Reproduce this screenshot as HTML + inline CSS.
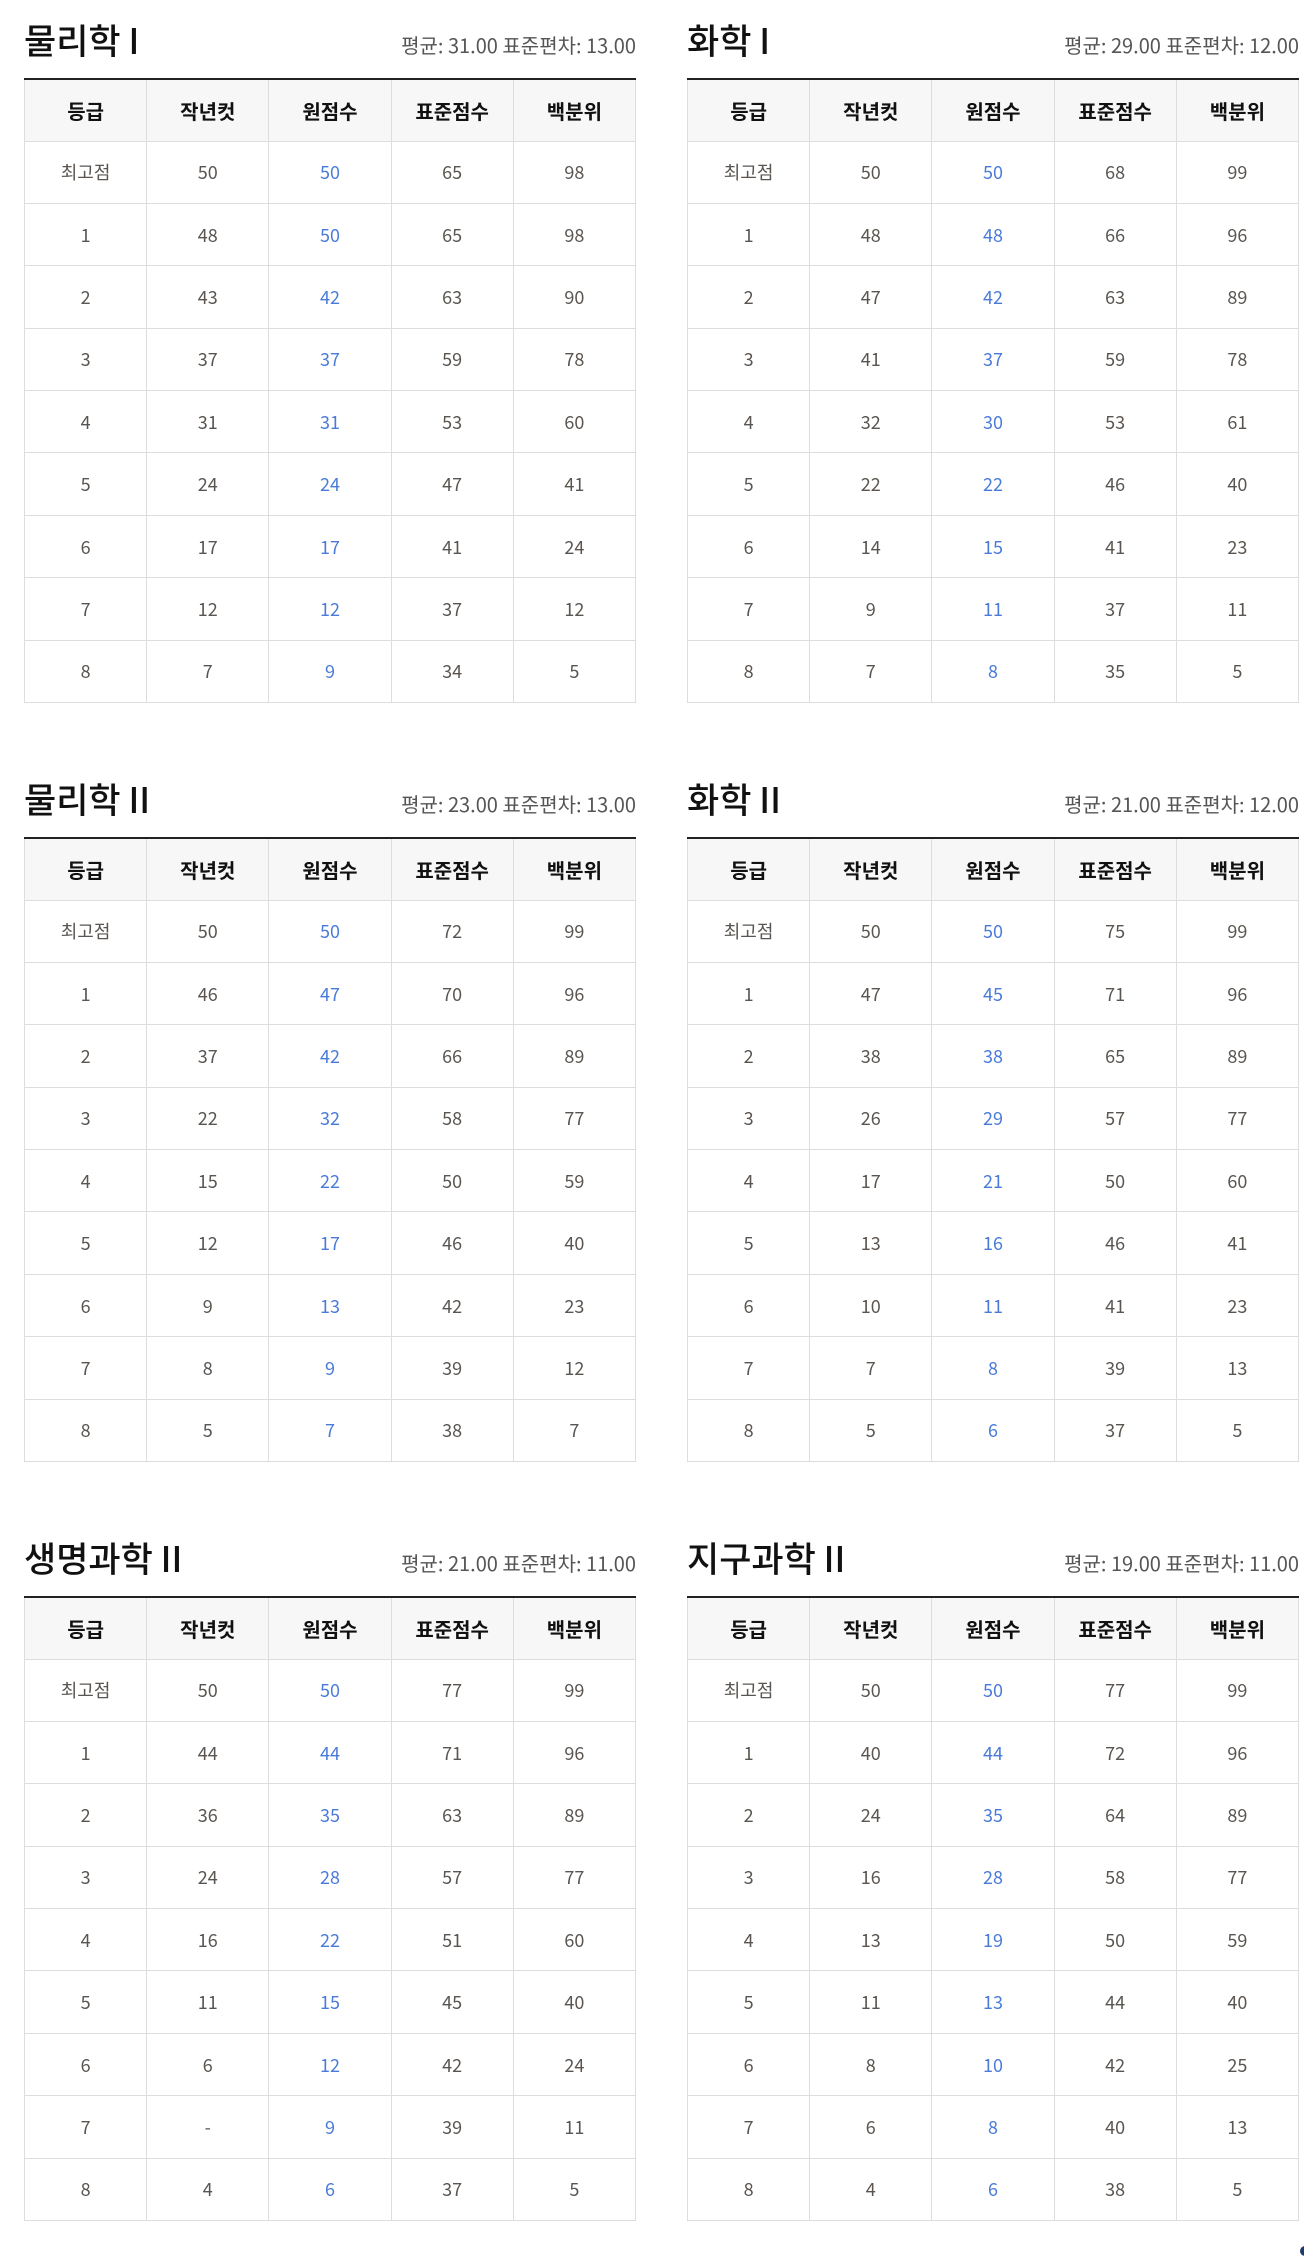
<!DOCTYPE html>
<html><head><meta charset="utf-8">
<style>
*{margin:0;padding:0;box-sizing:border-box}
html,body{width:1304px;height:2264px;background:#fff;overflow:hidden;font-family:"Noto Sans CJK KR","Liberation Sans",sans-serif}
.sec{position:absolute;width:612px;height:720px}
.t{position:absolute;left:0;top:18px;font-size:35px;line-height:44px;color:#111;font-weight:500}
.s{position:absolute;right:0;top:32px;font-size:20px;line-height:26px;color:#555}
table{position:absolute;left:0;top:78px;width:612px;border-collapse:collapse;border-top:2px solid #222;table-layout:fixed}
td,th{border:1px solid #ddd;text-align:center;font-size:18px;color:#5a5550;height:62.4px;padding:0}
th{background:#f7f7f7;color:#111;font-weight:bold;font-size:20px;height:62px;border-top:none}
td.b{color:#4a7bd8}
</style></head><body>

<div class="sec" style="left:24px;top:0">
<div class="t">물리학 I</div><div class="s">평균: 31.00 표준편차: 13.00</div>
<table><tr><th>등급</th><th>작년컷</th><th>원점수</th><th>표준점수</th><th>백분위</th></tr>
<tr><td>최고점</td><td>50</td><td class="b">50</td><td>65</td><td>98</td></tr>
<tr><td>1</td><td>48</td><td class="b">50</td><td>65</td><td>98</td></tr>
<tr><td>2</td><td>43</td><td class="b">42</td><td>63</td><td>90</td></tr>
<tr><td>3</td><td>37</td><td class="b">37</td><td>59</td><td>78</td></tr>
<tr><td>4</td><td>31</td><td class="b">31</td><td>53</td><td>60</td></tr>
<tr><td>5</td><td>24</td><td class="b">24</td><td>47</td><td>41</td></tr>
<tr><td>6</td><td>17</td><td class="b">17</td><td>41</td><td>24</td></tr>
<tr><td>7</td><td>12</td><td class="b">12</td><td>37</td><td>12</td></tr>
<tr><td>8</td><td>7</td><td class="b">9</td><td>34</td><td>5</td></tr></table></div>

<div class="sec" style="left:687px;top:0">
<div class="t">화학 I</div><div class="s">평균: 29.00 표준편차: 12.00</div>
<table><tr><th>등급</th><th>작년컷</th><th>원점수</th><th>표준점수</th><th>백분위</th></tr>
<tr><td>최고점</td><td>50</td><td class="b">50</td><td>68</td><td>99</td></tr>
<tr><td>1</td><td>48</td><td class="b">48</td><td>66</td><td>96</td></tr>
<tr><td>2</td><td>47</td><td class="b">42</td><td>63</td><td>89</td></tr>
<tr><td>3</td><td>41</td><td class="b">37</td><td>59</td><td>78</td></tr>
<tr><td>4</td><td>32</td><td class="b">30</td><td>53</td><td>61</td></tr>
<tr><td>5</td><td>22</td><td class="b">22</td><td>46</td><td>40</td></tr>
<tr><td>6</td><td>14</td><td class="b">15</td><td>41</td><td>23</td></tr>
<tr><td>7</td><td>9</td><td class="b">11</td><td>37</td><td>11</td></tr>
<tr><td>8</td><td>7</td><td class="b">8</td><td>35</td><td>5</td></tr></table></div>

<div class="sec" style="left:24px;top:759px">
<div class="t">물리학 II</div><div class="s">평균: 23.00 표준편차: 13.00</div>
<table><tr><th>등급</th><th>작년컷</th><th>원점수</th><th>표준점수</th><th>백분위</th></tr>
<tr><td>최고점</td><td>50</td><td class="b">50</td><td>72</td><td>99</td></tr>
<tr><td>1</td><td>46</td><td class="b">47</td><td>70</td><td>96</td></tr>
<tr><td>2</td><td>37</td><td class="b">42</td><td>66</td><td>89</td></tr>
<tr><td>3</td><td>22</td><td class="b">32</td><td>58</td><td>77</td></tr>
<tr><td>4</td><td>15</td><td class="b">22</td><td>50</td><td>59</td></tr>
<tr><td>5</td><td>12</td><td class="b">17</td><td>46</td><td>40</td></tr>
<tr><td>6</td><td>9</td><td class="b">13</td><td>42</td><td>23</td></tr>
<tr><td>7</td><td>8</td><td class="b">9</td><td>39</td><td>12</td></tr>
<tr><td>8</td><td>5</td><td class="b">7</td><td>38</td><td>7</td></tr></table></div>

<div class="sec" style="left:687px;top:759px">
<div class="t">화학 II</div><div class="s">평균: 21.00 표준편차: 12.00</div>
<table><tr><th>등급</th><th>작년컷</th><th>원점수</th><th>표준점수</th><th>백분위</th></tr>
<tr><td>최고점</td><td>50</td><td class="b">50</td><td>75</td><td>99</td></tr>
<tr><td>1</td><td>47</td><td class="b">45</td><td>71</td><td>96</td></tr>
<tr><td>2</td><td>38</td><td class="b">38</td><td>65</td><td>89</td></tr>
<tr><td>3</td><td>26</td><td class="b">29</td><td>57</td><td>77</td></tr>
<tr><td>4</td><td>17</td><td class="b">21</td><td>50</td><td>60</td></tr>
<tr><td>5</td><td>13</td><td class="b">16</td><td>46</td><td>41</td></tr>
<tr><td>6</td><td>10</td><td class="b">11</td><td>41</td><td>23</td></tr>
<tr><td>7</td><td>7</td><td class="b">8</td><td>39</td><td>13</td></tr>
<tr><td>8</td><td>5</td><td class="b">6</td><td>37</td><td>5</td></tr></table></div>

<div class="sec" style="left:24px;top:1518px">
<div class="t">생명과학 II</div><div class="s">평균: 21.00 표준편차: 11.00</div>
<table><tr><th>등급</th><th>작년컷</th><th>원점수</th><th>표준점수</th><th>백분위</th></tr>
<tr><td>최고점</td><td>50</td><td class="b">50</td><td>77</td><td>99</td></tr>
<tr><td>1</td><td>44</td><td class="b">44</td><td>71</td><td>96</td></tr>
<tr><td>2</td><td>36</td><td class="b">35</td><td>63</td><td>89</td></tr>
<tr><td>3</td><td>24</td><td class="b">28</td><td>57</td><td>77</td></tr>
<tr><td>4</td><td>16</td><td class="b">22</td><td>51</td><td>60</td></tr>
<tr><td>5</td><td>11</td><td class="b">15</td><td>45</td><td>40</td></tr>
<tr><td>6</td><td>6</td><td class="b">12</td><td>42</td><td>24</td></tr>
<tr><td>7</td><td>-</td><td class="b">9</td><td>39</td><td>11</td></tr>
<tr><td>8</td><td>4</td><td class="b">6</td><td>37</td><td>5</td></tr></table></div>

<div class="sec" style="left:687px;top:1518px">
<div class="t">지구과학 II</div><div class="s">평균: 19.00 표준편차: 11.00</div>
<table><tr><th>등급</th><th>작년컷</th><th>원점수</th><th>표준점수</th><th>백분위</th></tr>
<tr><td>최고점</td><td>50</td><td class="b">50</td><td>77</td><td>99</td></tr>
<tr><td>1</td><td>40</td><td class="b">44</td><td>72</td><td>96</td></tr>
<tr><td>2</td><td>24</td><td class="b">35</td><td>64</td><td>89</td></tr>
<tr><td>3</td><td>16</td><td class="b">28</td><td>58</td><td>77</td></tr>
<tr><td>4</td><td>13</td><td class="b">19</td><td>50</td><td>59</td></tr>
<tr><td>5</td><td>11</td><td class="b">13</td><td>44</td><td>40</td></tr>
<tr><td>6</td><td>8</td><td class="b">10</td><td>42</td><td>25</td></tr>
<tr><td>7</td><td>6</td><td class="b">8</td><td>40</td><td>13</td></tr>
<tr><td>8</td><td>4</td><td class="b">6</td><td>38</td><td>5</td></tr></table></div>

<div style="position:absolute;left:1300px;top:2246px;width:10px;height:10px;border-radius:50%;background:#1e3a6e"></div>
</body></html>
